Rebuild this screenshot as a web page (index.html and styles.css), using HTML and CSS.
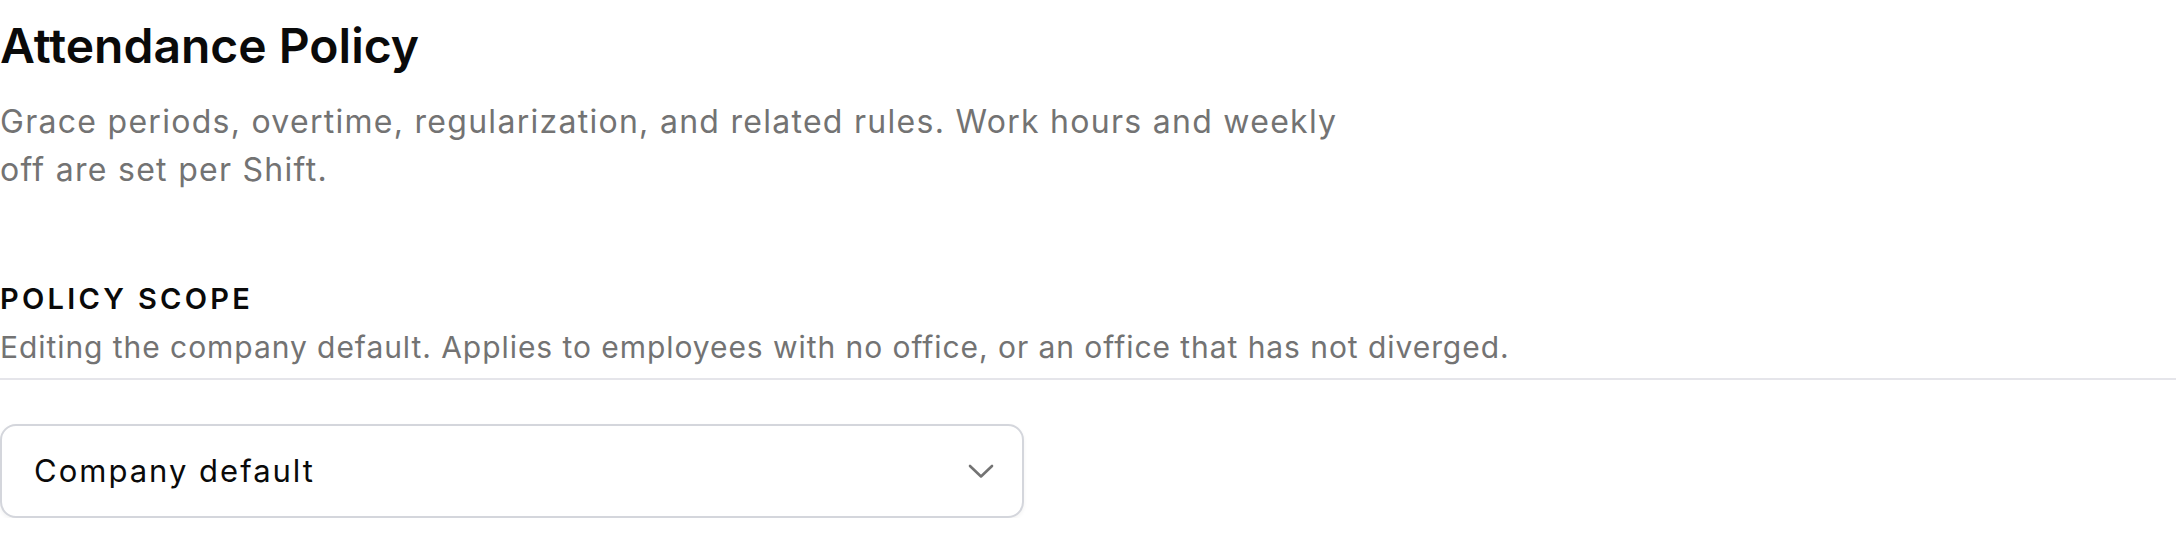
FILE: index.html
```html
<!DOCTYPE html>
<html lang="en">
<head>
<meta charset="utf-8">
<title>Attendance Policy</title>
<link rel="stylesheet" href="styles.css">
</head>
<body>
<main class="page">
  <header class="page-header">
    <h1 class="title">Attendance Policy</h1>
    <p class="subtitle">Grace periods, overtime, regularization, and related rules. Work hours and weekly off are set per Shift.</p>
  </header>
  <section class="scope">
    <div class="scope-head">
      <h2 class="scope-title">Policy Scope</h2>
      <p class="scope-desc">Editing the company default. Applies to employees with no office, or an office that has not diverged.</p>
    </div>
    <div class="select">
      <span class="select-value">Company default</span>
      <svg class="chevron" width="26" height="15" viewBox="0 0 26 15" aria-hidden="true">
        <polyline points="2,2 13,12.5 24,2" fill="none" stroke="#737373" stroke-width="2.6" stroke-linecap="round" stroke-linejoin="round"/>
      </svg>
    </div>
  </section>
</main>
</body>
</html>
```
FILE: styles.css
```css
* { box-sizing: border-box; }
html, body { margin: 0; padding: 0; background: #ffffff; }
body {
  font-family: Inter, "Noto Sans", "Liberation Sans", sans-serif;
  color: #0a0a0a;
}
.page {
  padding-top: 14px;
}
.title {
  margin: 0;
  font-size: 48px;
  line-height: 64px;
  font-weight: 600;
  letter-spacing: 0;
}
.subtitle {
  margin: 20px 0 0;
  max-width: 1344px;
  font-size: 32px;
  line-height: 48px;
  letter-spacing: 1.28px;
  color: #737373;
}
.scope {
  margin-top: 85px;
}
.scope-head {
  padding-bottom: 11px;
  border-bottom: 2px solid #e5e5ea;
}
.scope-title {
  margin: 0;
  font-size: 29px;
  line-height: 40px;
  font-weight: 600;
  text-transform: uppercase;
  letter-spacing: 3.3px;
}
.scope-desc {
  margin: 8px 0 0;
  font-size: 30px;
  line-height: 40px;
  letter-spacing: 0.94px;
  color: #737373;
}
.select {
  margin-top: 44px;
  width: 1024px;
  height: 94px;
  border: 2px solid #d4d6dc;
  border-radius: 16px;
  box-shadow: 0 2px 4px rgba(0, 0, 0, 0.05);
  display: flex;
  align-items: center;
  justify-content: space-between;
  padding: 0 28px 0 32px;
  background: #ffffff;
}
.select-value {
  font-size: 31px;
  line-height: 40px;
  letter-spacing: 2px;
  color: #0a0a0a;
}
.chevron {
  display: block;
}
```
